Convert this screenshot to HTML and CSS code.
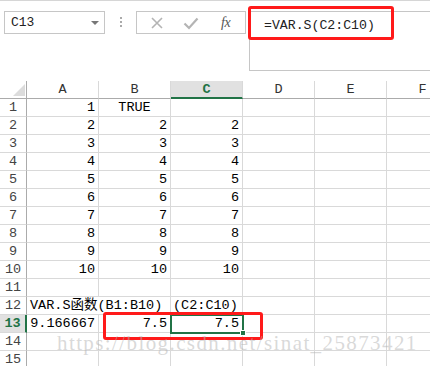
FILE: index.html
```html
<!DOCTYPE html>
<html>
<head>
<meta charset="utf-8">
<link rel="stylesheet" href="styles.css">
</head>
<body>
<div class="app">
  <div class="toolbar">
    <div class="namebox"><span class="name">C13</span><span class="caret"></span></div>
    <div class="dots"><i></i><i></i><i></i></div>
    <div class="btns">
      <svg class="ic" width="14" height="14" viewBox="0 0 14 14"><path d="M2 2L12 12M12 2L2 12" stroke="#b4b4b4" stroke-width="1.6" fill="none"/></svg>
      <svg class="ic" width="16" height="14" viewBox="0 0 16 14"><path d="M1.5 7.5L6 12L14.5 2.5" stroke="#b4b4b4" stroke-width="2.2" fill="none"/></svg>
      <span class="fx">fx</span>
    </div>
    <div class="formula"><span class="ftext">=VAR.S(C2:C10)</span></div>
  </div>
  <div class="grid">
    <div class="corner"><span class="tri"></span></div>
    <div class="ch">A</div><div class="ch">B</div><div class="ch sel">C</div><div class="ch">D</div><div class="ch">E</div><div class="ch">F</div>

    <div class="rh">1</div><div class="c n">1</div><div class="c ctr">TRUE</div><div class="c"></div><div class="c"></div><div class="c"></div><div class="c"></div>
    <div class="rh">2</div><div class="c n">2</div><div class="c n">2</div><div class="c n">2</div><div class="c"></div><div class="c"></div><div class="c"></div>
    <div class="rh">3</div><div class="c n">3</div><div class="c n">3</div><div class="c n">3</div><div class="c"></div><div class="c"></div><div class="c"></div>
    <div class="rh">4</div><div class="c n">4</div><div class="c n">4</div><div class="c n">4</div><div class="c"></div><div class="c"></div><div class="c"></div>
    <div class="rh">5</div><div class="c n">5</div><div class="c n">5</div><div class="c n">5</div><div class="c"></div><div class="c"></div><div class="c"></div>
    <div class="rh">6</div><div class="c n">6</div><div class="c n">6</div><div class="c n">6</div><div class="c"></div><div class="c"></div><div class="c"></div>
    <div class="rh">7</div><div class="c n">7</div><div class="c n">7</div><div class="c n">7</div><div class="c"></div><div class="c"></div><div class="c"></div>
    <div class="rh">8</div><div class="c n">8</div><div class="c n">8</div><div class="c n">8</div><div class="c"></div><div class="c"></div><div class="c"></div>
    <div class="rh">9</div><div class="c n">9</div><div class="c n">9</div><div class="c n">9</div><div class="c"></div><div class="c"></div><div class="c"></div>
    <div class="rh">10</div><div class="c n">10</div><div class="c n">10</div><div class="c n">10</div><div class="c"></div><div class="c"></div><div class="c"></div>
    <div class="rh">11</div><div class="c"></div><div class="c"></div><div class="c"></div><div class="c"></div><div class="c"></div><div class="c"></div>
    <div class="rh">12</div><div class="c ovf">VAR.S函数(B1:B10)</div><div class="c nol"></div><div class="c txt">(C2:C10)</div><div class="c"></div><div class="c"></div><div class="c"></div>
    <div class="rh rsel">13</div><div class="c n">9.166667</div><div class="c n">7.5</div><div class="c n active">7.5<span class="handle"></span></div><div class="c"></div><div class="c"></div><div class="c"></div>
    <div class="rh">14</div><div class="c"></div><div class="c"></div><div class="c"></div><div class="c"></div><div class="c"></div><div class="c"></div>
    <div class="rh">15</div><div class="c"></div><div class="c"></div><div class="c"></div><div class="c"></div><div class="c"></div><div class="c"></div>
  </div>
  <div class="mark mark-formula"></div>
  <div class="mark mark-cells"></div>
  <div class="watermark">https://blog.csdn.net/sinat_25873421</div>
</div>
</body>
</html>
```
FILE: styles.css
```css
* { box-sizing: border-box; }
html, body { margin: 0; padding: 0; background: #fff; }
body { width: 430px; height: 366px; overflow: hidden; font-family: "Liberation Mono", "Noto Sans CJK SC", monospace; }
.app { position: relative; width: 430px; height: 366px; overflow: hidden; border-top: 1px solid #d6d6d6; }

.toolbar { display: flex; align-items: flex-start; height: 80px; padding: 10px 0 0 4px; }
.namebox { width: 101px; height: 23px; border: 1px solid #c6c6c6; display: flex; align-items: center; justify-content: space-between; padding: 0 5px 0 6px; }
.name { font-size: 13px; color: #222; }
.caret { width: 0; height: 0; border-left: 4px solid transparent; border-right: 4px solid transparent; border-top: 4px solid #777; }
.dots { width: 31px; display: flex; flex-direction: column; align-items: center; gap: 2px; padding-top: 6px; }
.dots i { display: block; width: 2px; height: 2px; background: #aaa; }
.btns { width: 110px; height: 23px; border: 1px solid #c6c6c6; display: flex; align-items: center; padding-left: 13px; }
.btns .ic:nth-child(2) { margin-left: 19px; }
.fx { margin-left: 22px; font-family: "Liberation Serif", serif; font-style: italic; font-size: 14px; color: #555; letter-spacing: -0.5px; }
.formula { flex: 1; margin-left: 3px; height: 60px; border: 1px solid #c6c6c6; border-right: none; padding: 4px 0 0 14px; }
.ftext { font-size: 13.2px; color: #222; }

.grid { display: grid; grid-template-columns: 27px repeat(6, 72px); grid-auto-rows: 18px; font-size: 13.5px; color: #000; }
.corner { border-right: 1px solid #ababab; border-bottom: 1px solid #ababab; position: relative; }
.tri { position: absolute; right: 1px; bottom: 2px; width: 0; height: 0; border-left: 12px solid transparent; border-bottom: 12px solid #dcdcdc; }
.ch { text-align: center; color: #333; border-right: 1px solid #d9d9d9; border-bottom: 1px solid #ababab; line-height: 17px; }
.ch.sel { background: #e1e1e1; color: #217346; font-weight: bold; border-bottom: 2px solid #217346; }
.rh { text-align: center; color: #444; border-right: 1px solid #ababab; border-bottom: 1px solid #d9d9d9; line-height: 18px; }
.rh.rsel { background: #e1e1e1; color: #217346; font-weight: bold; border-right: 2px solid #217346; }
.c { border-right: 1px solid #d9d9d9; border-bottom: 1px solid #d9d9d9; line-height: 18px; padding: 0 3px; white-space: nowrap; position: relative; }
.c.n { text-align: right; }
.c.ctr { text-align: center; }
.c.ovf { overflow: visible; border-right: none; z-index: 1; }
.c.nol { border-left: none; }
.c.txt { text-align: left; padding-left: 2px; }
.c.active { outline: 2px solid #217346; outline-offset: -1px; z-index: 2; }
.handle { position: absolute; right: -4px; bottom: -4px; width: 6px; height: 6px; background: #217346; border: 1px solid #fff; }

.mark { position: absolute; border: 3px solid #ff1a1a; border-radius: 3px; z-index: 5; }
.mark-formula { left: 248px; top: 5px; width: 146px; height: 34px; }
.mark-cells { left: 103px; top: 311px; width: 160px; height: 28px; }
.watermark { position: absolute; left: 57px; top: 330px; font-family: "Liberation Serif", serif; font-size: 21px; letter-spacing: 1.4px; color: rgba(180,180,180,0.5); z-index: 6; white-space: nowrap; }
```
